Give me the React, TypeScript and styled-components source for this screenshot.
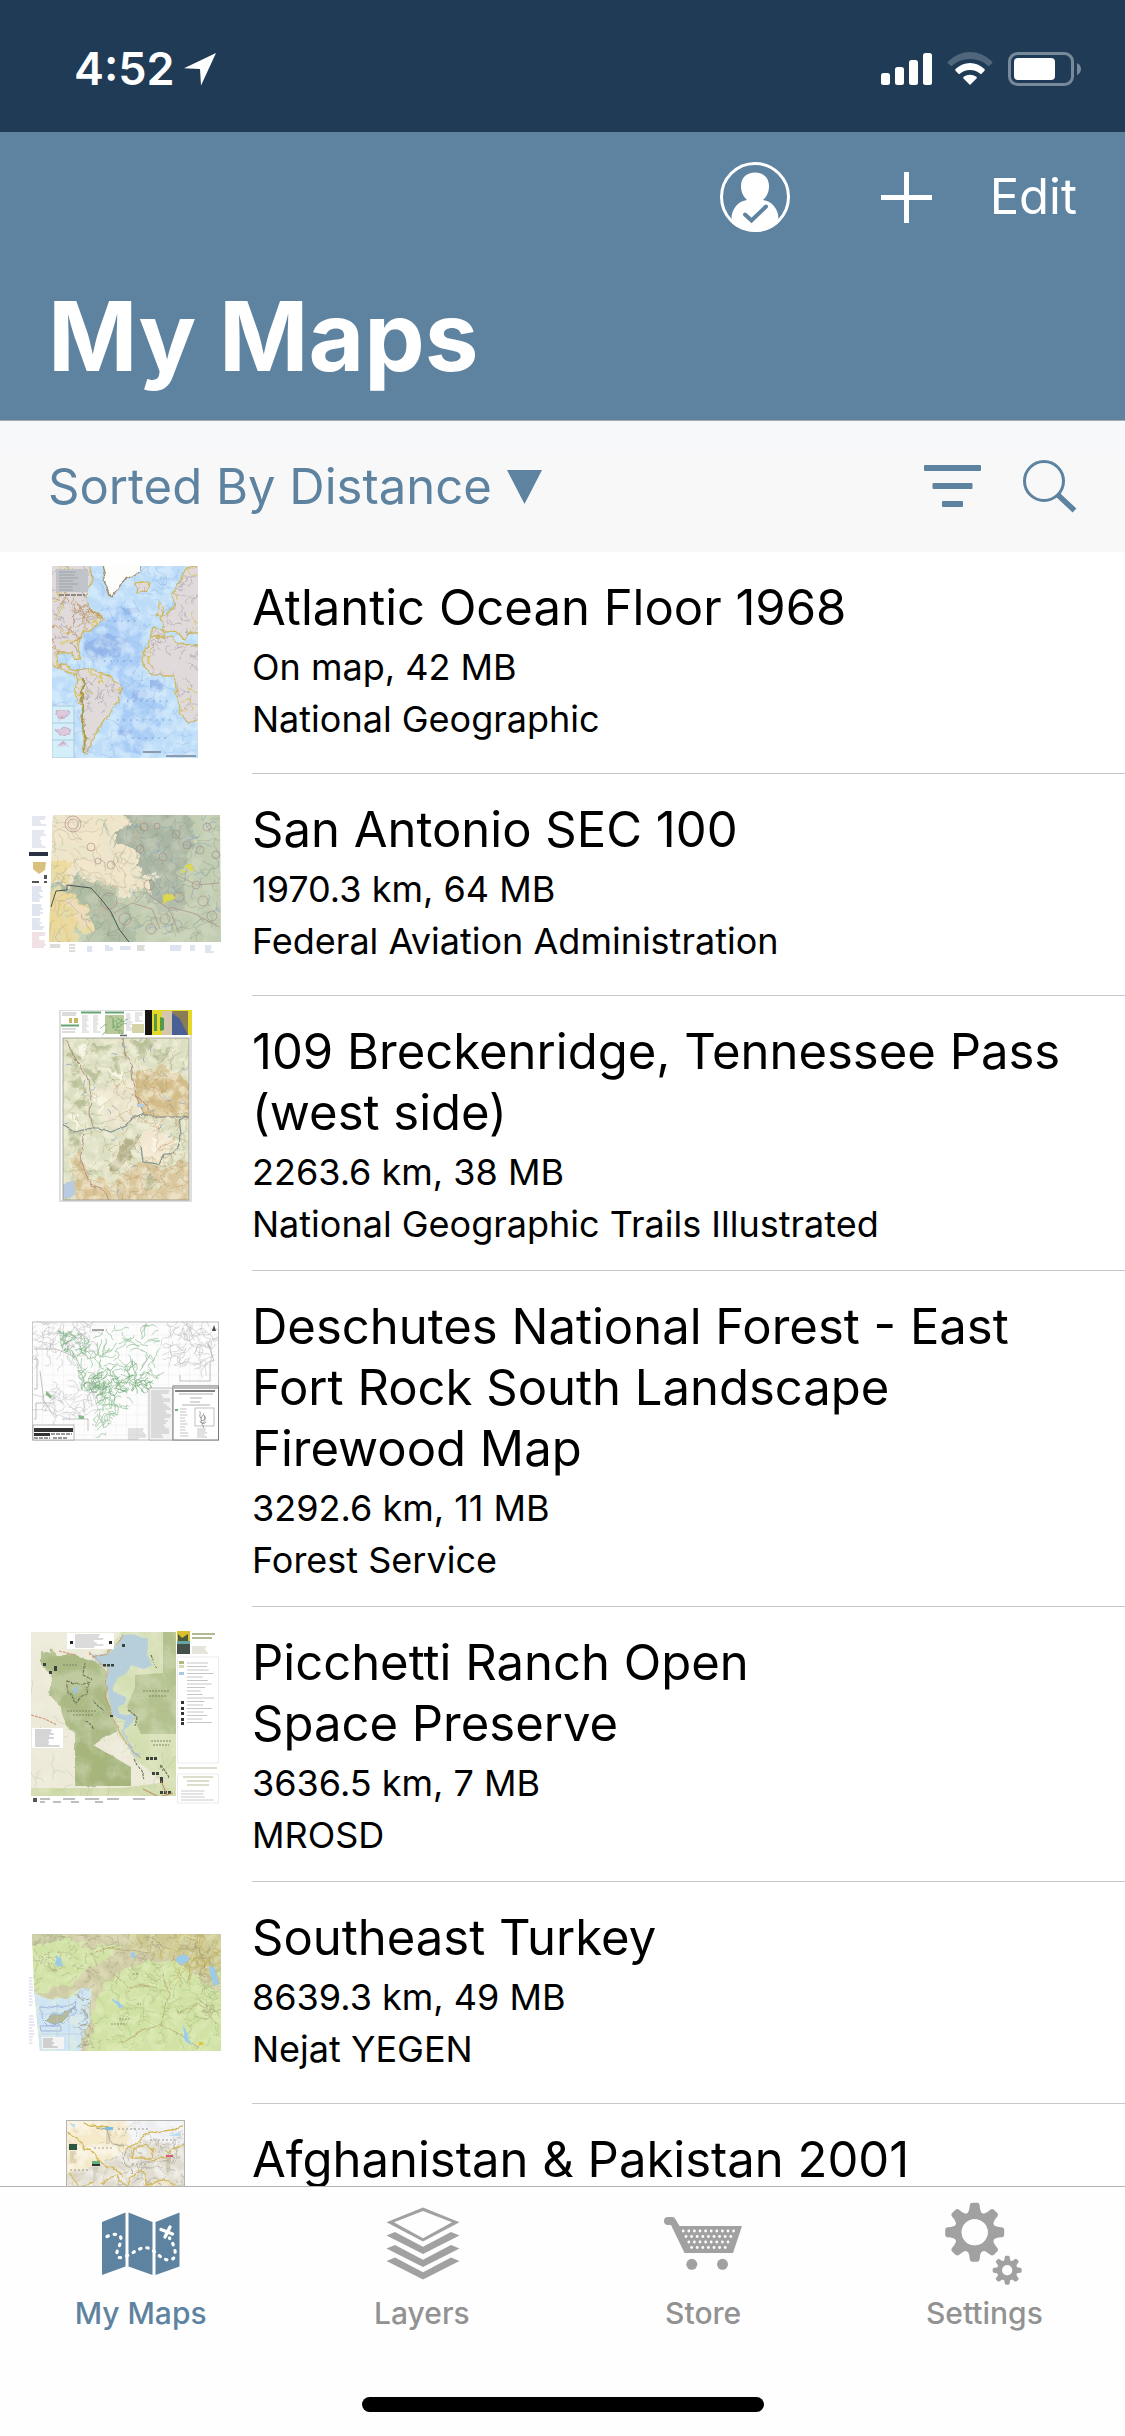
import React from "react";
import styled, { createGlobalStyle } from "styled-components";

const color = {
  status: "#1f3b56",
  brand: "#5d83a0",
  bar: "#f8f8f8",
  line: "#c8c7cc",
  tabLine: "#b2b2b2",
  tabBar: "#fefefe",
  muted: "#929292",
  icon: "#a1a1a1",
};

const GlobalStyle = createGlobalStyle`
  * { box-sizing: border-box; }
  body { margin: 0; background: #fff; font-family: Inter, "Liberation Sans", sans-serif; }
  button { border: 0; padding: 0; background: none; font: inherit; color: inherit; cursor: pointer; }
  svg { display: block; flex: none; }
`;

const Screen = styled.div`
  display: flex;
  flex-direction: column;
  height: 100vh;
  overflow: hidden;
`;

const StatusBar = styled.div`
  flex: none;
  display: flex;
  justify-content: space-between;
  align-items: center;
  height: 132px;
  padding: 6px 44px 0 74px;
  background: ${color.status};
  color: #fff;
`;

const Clock = styled.div`
  display: flex;
  align-items: center;
  gap: 8px;
  font-size: 45px;
  line-height: 54px;
  font-weight: 600;
`;

const Indicators = styled.div`
  display: flex;
  align-items: center;
  gap: 15px;
`;

const Header = styled.header`
  flex: none;
  background: ${color.brand};
  color: #fff;
  padding: 0 48px 24px;
`;

const Toolbar = styled.div`
  display: flex;
  align-items: center;
  justify-content: flex-end;
  gap: 58px;
  height: 130px;
`;

const IconButton = styled.button<{ $after?: number }>`
  margin-right: ${(p) => p.$after ?? 0}px;
`;

const TextButton = styled.button`
  && {
    font-size: 49px;
    line-height: 60px;
    font-weight: 400;
  }
`;

const PageTitle = styled.h1`
  margin: 14px 0 0;
  font-size: 96px;
  line-height: 120px;
  font-weight: 700;
`;

const SortBar = styled.div`
  flex: none;
  display: flex;
  align-items: center;
  justify-content: space-between;
  height: 132px;
  padding: 0 48px;
  border-top: 1px solid #a5abb0;
  background: linear-gradient(#f7f8fa, ${color.bar} 50%);
  color: ${color.brand};
`;

const SortButton = styled.button`
  && {
    display: flex;
    align-items: center;
    gap: 15px;
    font-size: 49px;
    line-height: 60px;
  }
`;

const SortTools = styled.div`
  display: flex;
  align-items: center;
  gap: 42px;
`;

const List = styled.ul`
  flex: 1;
  min-height: 0;
  margin: 0;
  padding: 0;
  list-style: none;
  overflow-y: auto;
  scrollbar-width: none;
`;

const Row = styled.li`
  display: flex;
  gap: 31px;
  padding-left: 29px;
`;

const Thumb = styled.div`
  flex: none;
  display: flex;
  align-items: center;
  justify-content: center;
  width: 192px;
  height: 192px;
  margin-top: 14px;
`;

const Details = styled.div`
  flex: 1;
  min-height: 222px;
  padding: 25px 60px 20px 0;
  border-bottom: 1px solid ${color.line};
`;

const Name = styled.h2`
  margin: 0 0 3px;
  font-size: 49px;
  line-height: 61px;
  font-weight: 400;
  color: #000;
`;

const Meta = styled.p`
  margin: 0;
  font-size: 36px;
  line-height: 52px;
  color: #000;
`;

const TabBar = styled.nav`
  flex: none;
  display: grid;
  grid-template-columns: repeat(4, 1fr);
  padding-top: 12px;
  border-top: 1px solid ${color.tabLine};
  background: ${color.tabBar};
`;

const Tab = styled.a<{ $active?: boolean }>`
  display: flex;
  flex-direction: column;
  align-items: center;
  gap: 6px;
  color: ${(p) => (p.$active ? color.brand : color.muted)};
  font-size: 30px;
  line-height: 36px;
  font-weight: 500;
  text-decoration: none;

  svg { color: ${(p) => (p.$active ? color.brand : color.icon)}; }
`;

const HomeIndicator = styled.div`
  grid-column: 1 / -1;
  justify-self: center;
  width: 402px;
  height: 15px;
  margin: 66px 0 24px;
  border-radius: 8px;
  background: #000;
`;

/* ---------- generated map linework ---------- */

function random(seed: number) {
  let s = seed;
  return () => {
    s = (s * 16807) % 2147483647;
    return s / 2147483647;
  };
}

/* Short wandering lines spread over a box. */
function wander(seed: number, count: number, x: number, y: number, w: number, h: number, step = 4, legs = 5) {
  const r = random(seed * 7919 + 13);
  let d = "";
  for (let i = 0; i < count; i++) {
    let px = x + r() * w;
    let py = y + r() * h;
    let a = r() * 6.28;
    d += `M${px.toFixed(1)} ${py.toFixed(1)}`;
    for (let j = 0; j < legs; j++) {
      a += (r() - 0.5) * 2;
      px += Math.cos(a) * step;
      py += Math.sin(a) * step;
      d += `L${px.toFixed(1)} ${py.toFixed(1)}`;
    }
  }
  return d;
}

/* Rows of broken dashes that stand for tiny print. */
function print(seed: number, x: number, y: number, w: number, h: number, lead = 3) {
  const r = random(seed * 104729 + 7);
  let d = "";
  for (let py = y; py < y + h; py += lead) {
    d += `M${x} ${py}h${(w * (0.5 + r() * 0.5)).toFixed(1)}`;
  }
  return d;
}

type InkProps = { d: string; c: string; w?: number; o?: number; clip?: string };
const Ink = ({ d, c, w = 0.7, o = 1, clip }: InkProps) => (
  <path d={d} fill="none" stroke={c} strokeWidth={w} opacity={o} clipPath={clip ? `url(#${clip})` : undefined} />
);

/* Shaded relief laid over a rectangle. */
type ReliefProps = { id: string; x: number; y: number; w: number; h: number; f: number; o: number; tint: string };
const Relief = ({ id, x, y, w, h, f, o, tint }: ReliefProps) => (
  <>
    <filter id={id} x="0" y="0" width="1" height="1">
      <feTurbulence type="fractalNoise" baseFrequency={f} numOctaves="4" seed="5" />
      <feColorMatrix values="0 0 0 0 1  0 0 0 0 1  0 0 0 0 1  3.4 0 0 0 -1.3" result="n" />
      <feComposite in="SourceGraphic" in2="n" operator="in" />
    </filter>
    <rect x={x} y={y} width={w} height={h} fill={tint} opacity={o} filter={`url(#${id})`} />
  </>
);

/* Gives coastlines and contours an irregular, natural edge. */
const Rough = ({ id, f = 0.09, s = 10 }: { id: string; f?: number; s?: number }) => (
  <filter id={id} x="-0.1" y="-0.1" width="1.2" height="1.2" colorInterpolationFilters="sRGB">
    <feTurbulence type="fractalNoise" baseFrequency={f} numOctaves="4" seed="9" />
    <feDisplacementMap in="SourceGraphic" scale={s} xChannelSelector="R" yChannelSelector="G" />
  </filter>
);

const AtlanticMap = () => {
  const land =
    "M-8 -8H36L40 12L34 22L36 36L42 46L51 54L44 61L33 64L27 75L24 84L28 93L23 92L19 86L9 87L4 91L6 99L15 98L17 104L25 107L22 110L10 103L-8 94ZM26 106L37 102L55 109L60 115L71 121L67 134L58 147L49 161L41 170L37 189L31 184L31 144L23 124ZM99 72L119 71L126 78L154 79V151L137 157L130 149L124 124L122 109L101 109L90 97L92 84ZM99 62L113 63L109 52L118 45L121 40L120 28L133 7L154 -6V68L138 66L134 73L124 65L112 66L110 72L100 72ZM103 49L107 36L112 44L110 50ZM84 18L97 16L96 24L86 26Z";
  return (
    <svg width="146" height="192" viewBox="0 0 146 192">
      <defs><clipPath id="atl"><path d={land} /></clipPath><Rough id="atlf" s={8} /></defs>
      <rect width="146" height="192" fill="#bcdcf8" />
      <g filter="url(#atlf)">
        <path d="M45 45L70 40L95 60L88 95L80 110L100 125L115 150L90 190L60 180L75 130L60 105L30 92L30 72Z" fill="#a8ccf5" />
        <path d="M32 78l20-12 22 8-6 16-30 6zM80 125h14v9h-14zM98 115h12l2 9-14 1zM70 42l14-2 6 6-16 3zM66 164h14v5h-14z" fill="#8fb0e6" opacity=".75" />
      </g>
      <Relief id="atlr" x={0} y={0} w={146} h={192} f={0.09} o={0.6} tint="#dff1fd" />
      <Ink d={wander(3, 130, 0, 0, 146, 192, 3)} c="#7fa6dd" w={0.6} o={0.5} />
      <g filter="url(#atlf)">
        <path d={land} fill="#e0dadb" stroke="#cfbb62" strokeWidth="1.3" />
        <Ink clip="atl" d={wander(8, 330, 0, 0, 146, 192, 3, 4)} c="#8f8796" w={0.6} o={0.65} />
        <Ink clip="atl" d={wander(21, 60, 0, 0, 146, 192, 5, 4)} c="#d8c556" w={0.9} />
        <Ink clip="atl" d={wander(14, 50, 0, 30, 60, 60, 4, 4)} c="#b98d56" />
        <path d="M48 -6L54 20L62 32L71 16L88 4V-6Z" fill="#fdfdfb" stroke="#a08f72" strokeWidth="1.4" />
        <path d="M31 112L31 150L33 186" fill="none" stroke="#aa9c52" strokeWidth="2.2" />
      </g>
      <rect x="4" y="3" width="32" height="23" fill="#c0c4c9" />
      <Ink d={print(4, 7, 6, 26, 19)} c="#9aa1a8" w={1} />
      <path d="M7 29h26" stroke="#756f60" strokeWidth="1.400" strokeDasharray="5 1" />
      <path d="M0 140h22v52H0z" fill="#d4effa" stroke="#9cbccb" strokeWidth=".7" />
      <path d="M0 157h22M0 174h22" stroke="#9cbccb" strokeWidth=".7" />
      <path d="M4 147l6-3 8 3-2 5-9 1zM4 165l8-5 7 3-2 6-10 1zM4 180l6-3 9 2" fill="#dccade" stroke="#c08da0" strokeWidth=".6" filter="url(#atlf)" />
      <path d="M56 55h28M52 95h32M75 135h42M65 154h56M80 172h34" stroke="#6688b4" strokeWidth="1.200" strokeDasharray="1.500 5" opacity=".8" />
      <path d="M91 186h18M114 190h30" stroke="#8b9bad" strokeWidth="2" />
    </svg>
  );
};

const AntonioMap = () => (
  <svg width="192" height="139" viewBox="0 0 192 139">
    <defs>
      <clipPath id="ant"><path d="M24 0L191 0L192 127L20 127Z" /></clipPath>
      <Rough id="antf" s={16} />
    </defs>
    <g clipPath="url(#ant)">
      <rect width="192" height="127" fill="#c1ccb1" />
      <g filter="url(#antf)">
        <path d="M95 -8L160 -8L165 30L150 60L160 90L130 100L110 70L80 45Z" fill="#aab6a4" />
        <path d="M24 70L56 64L85 78L112 110L100 135H50L66 112Z" fill="#aebca4" />
        <path d="M10 -8H97L100 10L88 20L86 30L104 31L110 43L108 52L130 60L118 67L122 78L106 74L98 82L84 70L60 66L50 60L42 70L10 72Z" fill="#f2e6cb" />
        <path d="M10 44L42 46L40 66L10 72Z" fill="#eddc9f" />
        <path d="M10 78L40 76L54 90L60 104L66 113L58 118L48 112L50 135H10Z" fill="#ecd897" />
        <path d="M36 80l16 10 14 26-12-4-12-18z" fill="#efdcba" />
      </g>
      <Relief id="antr" x={20} y={0} w={172} h={127} f={0.07} o={0.35} tint="#dfe3cc" />
      <Ink d={wander(5, 190, 20, 0, 172, 127, 3)} c="#7f927f" w={0.6} o={0.5} />
      <Ink d={wander(6, 40, 100, 5, 90, 115, 3, 4)} c="#7f9fc0" o={0.7} />
      <Ink d={wander(16, 50, 24, 5, 80, 110, 5, 5)} c="#cdb595" w={0.6} o={0.7} />
      <g fill="none" stroke="#a9807f" strokeWidth=".7" opacity=".8">
        {[[44, 9, 8], [44, 9, 5], [62, 32, 4], [82, 50, 4], [69, 46, 3], [115, 12, 4], [128, 11, 3], [147, 19, 4], [111, 34, 4], [134, 42, 4], [158, 30, 4], [171, 35, 4], [187, 40, 4], [120, 70, 5], [80, 86, 8], [136, 104, 5], [122, 114, 5], [174, 86, 5], [183, 101, 5], [96, 104, 6], [150, 82, 5], [167, 70, 4], [178, 12, 4]].map(([x, y, r], i) => (
          <circle key={i} cx={x} cy={y} r={r} />
        ))}
        <path d="M85 98l18-10 20 6 8 20M140 92l24 6 26 14M120 80l20 14 10 24M148 60l20 10 22-2" />
      </g>
      <path d="M22 92L27 76L38 75V70L62 73L72 84L82 97L90 114L100 127" fill="none" stroke="#4a5350" strokeWidth="1" />
      <path d="M154 51l8-1 1 5-6 4zM133 80l9-2 1 7-9 2z" fill="#dcd650" filter="url(#antf)" />
    </g>
    <rect x="0" y="37" width="19" height="4" fill="#2a3143" />
    <path d="M4 47l13 0-1 8-6 4-6-5z" fill="#d9c07d" />
    <path d="M15 60h3v4h-3zM3 66h7v2H3zM15 66h3v2h-3z" fill="#555" />
    <Ink d={print(1, 3, 2, 15, 10, 2) + print(2, 3, 16, 15, 17, 2)} c="#aab4cd" w={0.8} o={0.8} />
    <Ink d={print(3, 3, 72, 13, 15, 2) + print(4, 3, 90, 15, 12, 2) + print(5, 3, 104, 15, 11, 2)} c="#b0bcd6" w={0.8} />
    <Ink d={print(6, 3, 118, 14, 16, 2)} c="#dcb5bc" w={0.8} />
    <Ink d={print(7, 21, 130, 12, 3, 2) + print(8, 40, 130, 8, 8) + print(9, 108, 131, 11, 6, 2)} c="#a8a8a0" w={0.8} />
    <Ink d={print(10, 58, 132, 9, 6, 2) + print(11, 76, 131, 8, 6, 2) + print(12, 91, 132, 12, 4, 2) + print(13, 141, 131, 14, 6, 2) + print(14, 161, 131, 7, 5, 2) + print(15, 176, 131, 10, 7, 2)} c="#a9bddb" w={0.8} />
  </svg>
);

const BreckenridgeMap = () => (
  <svg width="133" height="192" viewBox="0 0 133 192">
    <defs>
      <clipPath id="brk"><rect x="4" y="28" width="126" height="162" /></clipPath>
      <Rough id="brkf" s={14} />
      <Rough id="brkl" s={5} />
    </defs>
    <rect width="133" height="192" fill="#dedede" />
    <rect x="2" y="1" width="129" height="189" fill="#fff" />
    <Ink d={print(1, 3, 3, 16, 3, 2) + print(2, 3, 19, 17, 6)} c="#999" />
    <path d="M22 1.5h20v2H22zM46 1.5h19v2H46zM2 14.500h18v2H2z" fill="#65a574" />
    <Ink d={print(3, 23, 6, 8, 18, 2) + print(4, 34, 6, 8, 18, 2) + print(5, 67, 4, 8, 18, 2) + print(6, 76, 3, 8, 9, 2)} c="#b5b5b5" />
    <path d="M46 5h19v19H46z" fill="#b8ca9a" />
    <Ink d={wander(2, 14, 48, 7, 14, 14, 2, 4)} c="#6ba469" />
    <path d="M10 8h3v5h-3zM15 8h4v5h-4z" fill="#c7b765" />
    <path d="M73 14h12v9H73z" fill="#d5d4a8" />
    <path d="M86 0h7v25h-7z" fill="#161616" />
    <path d="M93 0h40v25H93z" fill="#e4d928" />
    <path d="M103 1h26v24h-26z" fill="#8a7c55" />
    <path d="M103 1l10 0 2 12 2 12h-14z" fill="#d5c7ad" />
    <path d="M113 3l8 6 4 8 4 8h-16z" fill="#4a6094" />
    <path d="M101 7l4 1v12l-4 1zM95 4h3v17h-3z" fill="#559b47" />
    <path d="M61 25.500h7" stroke="#666" strokeWidth="1.500" />
    <g clipPath="url(#brk)">
      <rect x="4" y="28" width="126" height="162" fill="#dcdfc2" />
      <g filter="url(#brkf)">
        <path d="M78 64L104 55L118 62L140 80V108L110 105L86 106L76 90L74 76Z" fill="#d3bc88" />
        <path d="M18 130L24 148L30 170L42 168L60 180L70 200H20L14 160Z" fill="#d9c294" />
        <path d="M62 165L80 150L104 160L140 150V200H46Z" fill="#dac79d" />
        <path d="M82 122l20-6 12 14-6 24-26-4z" fill="#f2e6cf" />
        <path d="M46 75l30-4 4 40-26 6-20-20z" fill="#e9e3cb" />
        <path d="M70 125l10 2-8 20-14 12-8 0z" fill="#a39c74" opacity=".7" />
        <path d="M8 38l12 10-4 16zM30 34l24 2-12 12zM70 30l30 0-18 20zM8 72l14-6 4 18zM16 92l12-4 2 22zM50 48l20-6-10 18zM90 44l26-8-14 18zM26 56l16 4-8 16zM6 120l20 4-10 20zM88 160l10 20-12 2z" fill="#aeb68c" opacity=".7" />
        <path d="M20 34l8 4-6 14zM48 62l18-4-6 10zM36 84l12 4-10 16zM10 104l10 2-6 12zM92 130l10 6-8 10z" fill="#fbf8ea" opacity=".9" />
      </g>
      <Relief id="brkr" x={4} y={28} w={126} h={162} f={0.1} o={0.6} tint="#f8f3e0" />
      <g filter="url(#brkl)">
        <Ink d={wander(9, 130, 4, 28, 126, 162, 4, 4)} c="#a5a277" w={0.8} o={0.45} />
        <Ink d={wander(19, 70, 60, 60, 70, 130, 4, 4)} c="#bb9563" w={0.9} o={0.45} />
        <Ink d="M8 30L14 48L22 56L28 68L32 84L31 104L34 118M64 28L66 44L72 54L74 72L78 88L84 104M26 124L22 144L24 158L32 176L46 180L50 190M78 86L90 100" c="#a58374" w={0.8} />
        <path d="M2 114L16 122L32 118L40 118L52 122L66 116L74 108L84 103L90 106L130 106L120 110L122 124L118 138L112 144L104 144L100 154L84 152L82 136" fill="none" stroke="#84928f" strokeWidth="1.200" />
        <path d="M2 174L16 172L18 184L12 188L2 188Z" fill="#b8cbe0" />
      </g>
      <path d="M78 94h7v3h-7zM104 84l5 5-4-1z" fill="#b5cddc" />
      <Ink d={wander(4, 26, 6, 30, 120, 155, 2, 3)} c="#7c9dc0" />
    </g>
    <rect x="4" y="28" width="126" height="162" fill="none" stroke="#868b7c" strokeWidth=".7" />
  </svg>
);

const DeschutesMap = () => {
  const forest = "M26 8L60 14L84 4L125 2L128 22L132 44L150 46V55L124 58L118 70L106 76L96 88L82 96L72 118L60 116V100L66 92L62 72L48 68L44 40L30 28Z";
  return (
    <svg width="187" height="120" viewBox="0 0 187 120">
      <defs><clipPath id="des"><path d={forest} /></clipPath></defs>
      <rect x=".5" y="1" width="186" height="118" fill="#fdfdfd" stroke="#aaa" strokeWidth=".8" />
      <path d={Array.from({ length: 18 }, (_, i) => `M${i * 10.5} 1v118`).join("") + Array.from({ length: 12 }, (_, i) => `M0 ${i * 10 + 4}h187`).join("")} stroke="#ececec" strokeWidth=".5" />
      <Ink d={wander(2, 70, 2, 2, 60, 36, 3) + wander(5, 70, 136, 4, 46, 40, 3) + wander(6, 60, 10, 60, 60, 38, 3)} c="#b9b9b9" w={0.5} />
      <Ink d="M2 28H24L44 36L50 50M2 38H5V68H2M8 50L12 80L20 92M20 82H4V98H2M30 98H56V110M176 22L182 40H178V60H148V54M118 34L108 50" c="#9c9c9c" w={0.6} />
      <Ink clip="des" d={wander(7, 90, 26, 4, 100, 60, 3, 5) + wander(11, 110, 44, 45, 80, 70, 3, 5)} c="#93c198" w={0.7} />
      <Ink clip="des" d={wander(17, 60, 48, 48, 70, 24, 2, 6)} c="#72ac7a" w={0.7} />
      <Ink clip="des" d={wander(27, 30, 26, 8, 30, 25, 2, 5)} c="#72ac7a" w={0.7} />
      <path d="M14 70l6 5-1 3-5-4zM46 94l6 1v3h-5z" fill="#86b98b" />
      <path d="M117 67h24v52h-24z" fill="#f4f4f4" stroke="#999" strokeWidth=".6" />
      <Ink d={print(1, 119, 70, 20, 48, 2)} c="#b5b5b5" w={0.8} />
      <Ink d={print(7, 96, 108, 18, 11, 2)} c="#b5b5b5" w={0.8} />
      <rect x="141" y="65" width="45.500" height="54" fill="#fff" stroke="#777" strokeWidth="1" />
      <path d="M141 66h45v2h-45z" fill="#bbb" />
      <path d="M143 70h40" stroke="#555" strokeWidth="1.300" />
      <path d="M147 73h34M158 77h12M158 81h10M150 84h28" stroke="#999" strokeWidth=".8" />
      <rect x="163" y="87" width="19" height="18" fill="#fff" stroke="#999" strokeWidth=".6" />
      <Ink d={wander(3, 6, 168, 91, 8, 10, 2, 4)} c="#777" />
      <Ink d={print(3, 148, 88, 9, 28, 3) + print(4, 165, 108, 14, 9, 2)} c="#aaa" />
      <path d="M143 88h3v2h-3z" fill="#75ad7b" />
      <rect x="1" y="104" width="41" height="15" fill="#fff" stroke="#888" strokeWidth=".6" />
      <path d="M2 107h39v4H2zM2 112h16v3H2z" fill="#333" />
      <path d="M19 113h21M2 117h16M21 117h15" stroke="#777" strokeWidth="1.500" strokeDasharray="4 1" />
      <path d="M182 4l2 6h-4z" fill="#444" />
      <path d="M60 9h12" stroke="#888" strokeWidth="1.500" />
    </svg>
  );
};

const PicchettiMap = () => (
  <svg width="188" height="173" viewBox="0 0 188 173">
    <defs><clipPath id="pic"><rect y="1" width="145" height="164" /></clipPath><Rough id="picf" s={5} /></defs>
    <g clipPath="url(#pic)">
      <rect width="145" height="165" fill="#d6dfb6" />
      <g filter="url(#picf)">
        <path d="M-6 -6H95L72 25L62 28L76 40L75 70L84 100L104 128L130 150L140 165H-6Z" fill="#ece9d9" />
        <path d="M10 20L20 22V16L26 24L44 24L58 28L70 34L76 42L75 66L82 82L86 100L74 106L60 116L82 126L100 140V155H44V101L36 98L30 78L18 64L20 44L10 34Z" fill="#abba85" />
      </g>
      <path d="M62 114L100 136V155H45V110Z" fill="#a5b57c" />
      <path d="M76 40L76 66L84 88L96 112L112 132L145 165V100H104V46H92Z" fill="#d3deb1" filter="url(#picf)" />
      <path d="M132 1H145V103H110L104 90L96 76L104 56V44L132 42Z" fill="#b2c18d" />
      <path d="M0 157H90L145 150V165H0Z" fill="#cfdaa9" />
      <Relief id="picr" x={0} y={0} w={145} h={165} f={0.05} o={0.28} tint="#f6f5e4" />
      <Ink d={wander(8, 40, 0, 60, 140, 100, 4, 5)} c="#a7ad88" w={0.6} o={0.45} />
      <g filter="url(#picf)">
        <path d="M92 2L104 4L118 8L116 24L121 34L112 38L100 34L96 44L86 48L82 60L94 66V72L86 76L90 82L104 84L102 92L94 100L98 112L104 120L110 122L106 126L98 118L92 100L94 90L82 84L75 56L77 38L64 30L62 25L78 22L86 16Z" fill="#b7cfda" />
        <path d="M92 3L86 14L74 24L62 27M58 22L76 38L75 66L84 92L94 112L110 126" fill="none" stroke="#cb9a75" strokeWidth=".9" />
      </g>
      <path d="M28 20l16 4M0 84l14 4 12 6" fill="none" stroke="#cf9a7b" strokeWidth="1.200" strokeDasharray="3 1" />
      <g filter="url(#picf)">
        <path d="M36 50L50 54L58 50L56 62L46 72L38 60ZM54 32L52 44L60 48M60 68L72 80M54 90L62 98M96 78L106 86L104 96M120 24L126 38M104 128L114 148M130 134L138 146" fill="none" stroke="#6c7558" strokeWidth="1.100" strokeDasharray="3 1" />
        <path d="M42 58l4-2 1 6-4 2z" fill="#9fc3d8" />
      </g>
      <path d="M12 32h3v3h-3zM23 35h3v5h-3zM18 40h3v3h-3zM72 33h3v2.500h-3zM76 33h3v2.500h-3zM80 33h3v2.500h-3zM115 126h3v3h-3zM119 126h3v3h-3zM123 126h3v3h-3zM121 141h3v3h-3zM125 141h3v3h-3zM129 146h3v6h-3zM129 160h3v3h-3zM133 160h3v3h-3zM137 160h3v3h-3zM79 84h3v2h-3zM91 13h3v3h-3z" fill="#3c423c" />
      <path d="M36 2h47v16H36z" fill="#fff" />
      <Ink d={print(3, 44, 4, 34, 13, 2)} c="#999" />
      <path d="M39 10h3v3h-3zM78 10h3v3h-3z" fill="#222" />
      <path d="M1 97h31v20H1z" fill="#fff" />
      <Ink d={print(4, 4, 99, 26, 18, 2)} c="#888" />
      <path d="M36 80h30M42 84h20M112 60h26M118 65h18M120 110h20M122 114h16M32 34h14" stroke="#7c8760" strokeWidth="1.200" strokeDasharray="2 1" />
      <path d="M112 158l16 8 14-4M130 150l6 14" stroke="#bb8560" fill="none" />
    </g>
    <path d="M146 0h13v10h-13z" fill="#d9be2d" />
    <path d="M147 3l4 4 6-4v7h-10z" fill="#4a5a3a" />
    <path d="M146 10h13v3h-13z" fill="#66a5a0" />
    <path d="M146 13h13v10h-13z" fill="#44504a" />
    <path d="M161 3h23M161 7h20" stroke="#9aa16c" strokeWidth="1.500" />
    <Ink d={print(7, 161, 16, 16, 8, 2)} c="#b4b69a" />
    <rect x="146.500" y="26" width="41" height="106" fill="none" stroke="#ececec" />
    <Ink d={print(8, 156, 32, 27, 62, 3.5)} c="#bfbfbf" w={0.9} />
    <path d="M148 30h5v3h-5z" fill="#a9bb7e" />
    <path d="M148 34h5v3h-5z" fill="#d5deb3" />
    <path d="M148 41h5v3h-5z" fill="#a9c9dc" />
    <path d="M150 70h3v3h-3zM150 76h3v3h-3zM150 81h3v3h-3zM150 87h3v3h-3zM150 91h3v3h-3z" fill="#333" />
    <path d="M147 137h39M152 146h30M156 150h22M156 154h22" stroke="#b7bc9c" strokeWidth="1.200" />
    <Ink d={print(9, 150, 160, 34, 12, 3)} c="#b5b5b5" />
    <rect x="146.500" y="143" width="41" height="29" fill="none" stroke="#ececec" />
    <path d="M2 169h4" stroke="#555" strokeWidth="4" />
    <path d="M9 168h10M32 168h12M54 168h14M76 168h12M102 168h12M9 171h5M22 171h8M40 171h8M64 171h8" stroke="#aaa" strokeWidth="1.300" />
  </svg>
);

const TurkeyMap = () => (
  <svg width="192" height="117" viewBox="0 0 192 117">
    <defs>
      <clipPath id="tur"><path d="M3 0H192V117H11L5 54Z" /></clipPath>
      <Rough id="turf" s={14} />
      <Rough id="turl" s={5} />
    </defs>
    <g clipPath="url(#tur)">
      <rect width="192" height="117" fill="#d0e2a4" />
      <g filter="url(#turf)">
        <path d="M-8 -8H192V60L180 50L165 36L140 28L118 26L86 40L76 50L66 74L56 117H50L60 60L40 60L24 66L-6 58L40 52L70 30L100 10L60 14L36 0Z" fill="#cfcaa6" />
        <path d="M100 -8H180L200 20L188 50L160 30L130 22L100 16Z" fill="#cec994" />
        <path d="M-8 -8H30L36 6L-4 12Z" fill="#bdbf98" />
      </g>
      <path d="M0 56L24 66L46 62L52 54L64 54L60 70L62 84L54 104L50 124H0Z" fill="#cfe5f5" filter="url(#turl)" />
      <Relief id="turr" x={0} y={0} w={192} h={117} f={0.1} o={0.35} tint="#edf3cf" />
      <g filter="url(#turl)">
        <Ink d={wander(4, 150, 0, 0, 192, 46, 3, 4)} c="#968f6c" w={0.6} o={0.6} />
        <Ink d={wander(12, 100, 66, 36, 126, 80, 4, 4)} c="#a6bf7a" w={0.6} o={0.7} />
        <Ink d={wander(15, 24, 144, 0, 44, 40, 5, 5)} c="#c3ad3f" o={0.7} />
        <Ink d={wander(31, 40, 50, 55, 10, 60, 2, 4)} c="#8f8a70" w={0.6} o={0.7} />
        <Ink d={wander(33, 30, 172, 20, 16, 70, 3, 4)} c="#958d66" w={0.6} o={0.7} />
        <Ink d="M90 110L110 98L132 90L140 60L134 40M132 90L150 100L170 114M96 60L110 50L128 54M80 36L100 54L120 52M60 20L80 14L120 20M148 80L170 70L188 90" c="#b3a06c" w={0.7} />
        <path d="M16 86L22 80L32 80L46 72L40 82L34 88L24 90Z" fill="#b6b896" stroke="#8aa3c0" strokeWidth=".7" />
        <path d="M12 72L30 74L48 68L46 78L36 90L20 92L12 84Z" fill="none" stroke="#9aa8d8" strokeWidth=".8" />
        <path d="M28 20l4 4 2 8-8-1zM148 24l8-4 4 6-6 5-8-3zM180 32l6 3 4 14-5 2-4-10zM154 90l5 10 3 10-6-4zM82 64l8 4 6 4-6 1zM100 20l4-1 3 4-4 1z" fill="#9bcbe8" />
      </g>
      <path d="M11 92H32V97H12Z" fill="none" stroke="#9aa8d8" strokeWidth=".8" />
      <path d="M40 62v54M28 68v48M10 80h50M12 100h42" stroke="#b5cde2" strokeWidth=".6" />
      <path d="M13 103h22v12H13z" fill="#f4f4f4" />
      <Ink d={print(5, 14, 105, 18, 9, 2)} c="#aaa" w={1} />
      <path d="M82 90h16M90 85h10M148 78h4M104 40h6M108 70h4" stroke="#8b9872" strokeWidth="1.200" strokeDasharray="2 1" />
      <path d="M170 108h4v3h-4z" fill="#e0c92c" />
    </g>
    <Ink d={print(7, 0, 44, 4, 30, 3) + print(8, 0, 82, 6, 30, 3)} c="#d2cfe6" w={1} />
  </svg>
);

const AfghanistanMap = () => (
  <svg width="119" height="188" viewBox="0 0 119 188">
    <defs><clipPath id="afg"><rect width="119" height="188" /></clipPath><Rough id="afgf" s={7} /></defs>
    <rect width="119" height="188" fill="#eee9dc" />
    <g clipPath="url(#afg)">
      <g filter="url(#afgf)">
        <path d="M-6 -6H60L62 28L40 42L26 50L-6 58Z" fill="#f4e9c9" />
        <path d="M60 -6H126V30L90 36L70 28Z" fill="#eceef2" />
        <path d="M10 50L48 40L66 28L80 20L126 26V196H-6V58Z" fill="#e0dccf" />
        <path d="M-6 78h67l30-20 35 10v128H-6z" fill="#e8dfc3" />
      </g>
      <Relief id="afgr" x={1} y={1} w={117} h={186} f={0.08} o={0.5} tint="#fff" />
      <g filter="url(#afgf)">
        <Ink d={wander(6, 190, 50, 15, 66, 160, 3, 4)} c="#8f8c80" w={0.6} o={0.6} />
        <Ink d={wander(26, 40, 2, 4, 60, 160, 4, 4)} c="#c9b68a" w={0.6} o={0.5} />
        <path d="M1 12L10 16L18 26L26 32L40 46L58 56M18 2L24 6L44 8M62 30L74 22L80 14L92 12L104 10L118 6M68 30L78 24L88 30L84 38L66 38ZM36 62L50 56L60 64L72 50L80 52V66L96 58L110 66M84 40L100 38L106 28L118 24M2 54L14 66L30 62" fill="none" stroke="#d3b95c" strokeWidth="1.400" />
        <path d="M62 30L58 40L66 54M30 8L40 10L44 22L60 26" fill="none" stroke="#aea48e" strokeWidth="1" />
      </g>
    </g>
    <path d="M3 24h8v6H3z" fill="#2d5740" />
    <path d="M26 41h8v3h-8z" fill="#65b07c" />
    <path d="M26 44h8v2h-8z" fill="#333" />
    <path d="M39 7h8v3h-8z" fill="#7fbbe5" />
    <path d="M100 35h7v2h-7z" fill="#d85a80" />
    <Ink d={print(1, 4, 32, 7, 12, 2) + print(2, 27, 48, 6, 14, 2) + print(3, 40, 11, 7, 14, 2) + print(4, 100, 39, 6, 14, 2)} c="#b8ae92" />
    <path d="M52 9h32M84 20h26M28 28h18M66 44h14M4 50h18" stroke="#8a8576" strokeWidth="1.200" strokeDasharray="2 2" opacity=".8" />
    <path d="M102 16l12-4v4zM4 4h5v4z" fill="#bcdcf2" />
    <rect x=".5" y=".5" width="118" height="187" fill="none" stroke="#b4b4b0" />
  </svg>
);

/* ---------- icons ---------- */

const LocationIcon = () => (
  <svg width="34" height="34" viewBox="0 0 34 34" fill="#fff"><path d="M33 1L1 16.300L17 17L18 33.500Z" /></svg>
);

const SignalIcon = () => (
  <svg width="51" height="34" viewBox="0 0 51 34" fill="#fff">
    <rect y="21" width="9" height="12" rx="2.500" />
    <rect x="14" y="15" width="9" height="18" rx="2.500" />
    <rect x="28" y="8" width="9" height="25" rx="2.500" />
    <rect x="42" y="1" width="9" height="32" rx="2.500" />
  </svg>
);

const WifiIcon = () => (
  <svg width="46" height="34" viewBox="0 0 46 34" fill="#fff">
    <path opacity=".22" d="M1 9.500Q10.500 0 23 0T45 9.500Q46 10.500 45 11.500L41.500 14.300Q34 7 23 7T4.500 14.300L1 11.500Q0 10.500 1 9.500Z" />
    <path d="M8.500 17Q15 11 23 11T37.500 17Q38 18 37.500 18.800L34 22.300Q29 18 23 18T12 22.300L8.500 18.800Q8 18 8.500 17Z" />
    <path d="M16.500 24.800Q23 20.500 29.500 24.800Q30 25.800 29.500 26.500L23 33L16.500 26.500Q16 25.800 16.500 24.800Z" />
  </svg>
);

const BatteryIcon = () => (
  <svg width="73" height="34" viewBox="0 0 73 34">
    <rect x="1.500" y="1.500" width="63" height="31" rx="8" fill="none" stroke="#fff" strokeWidth="3" opacity=".4" />
    <rect x="6" y="6" width="41" height="22" rx="4" fill="#fff" />
    <path d="M69 11Q73 13 73 17T69 23Z" fill="#fff" opacity=".4" />
  </svg>
);

const ProfileIcon = () => (
  <svg width="72" height="72" viewBox="0 0 72 72">
    <clipPath id="avatar"><circle cx="36" cy="36" r="35" /></clipPath>
    <path clipPath="url(#avatar)" fill="#fff" d="M12.500 58C12.500 47 20 40 28 39C24 35 22 31 22 25C22 16.500 28 11.500 36 11.500S50 16.500 50 25C50 31 48 35 44 39C52 40 59.500 47 59.500 58L59 72H13Z" />
    <circle cx="36" cy="36" r="33.500" fill="none" stroke="#fff" strokeWidth="3" />
    <path d="M26 53.500L32.500 59.500L47 45.500" fill="none" stroke={color.brand} strokeWidth="4" strokeLinecap="round" />
  </svg>
);

const PlusIcon = () => (
  <svg width="51" height="51" viewBox="0 0 51 51" fill="#fff"><path d="M23 0h5v23h23v5H28v23h-5V28H0v-5h23Z" /></svg>
);

const CaretIcon = () => (
  <svg width="36" height="36" viewBox="0 0 36 36"><path d="M0 1H35L17.500 35Z" fill="currentColor" /></svg>
);

const FilterIcon = () => (
  <svg width="57" height="44" viewBox="0 0 57 44" fill="currentColor">
    <rect width="57" height="6" rx="1" />
    <rect x="8.500" y="18" width="40" height="6" rx="1" />
    <rect x="18" y="36" width="21" height="6" rx="1" />
  </svg>
);

const SearchIcon = () => (
  <svg width="54" height="54" viewBox="0 0 54 54" fill="none" stroke="currentColor">
    <circle cx="21" cy="21" r="19.500" strokeWidth="3" />
    <path d="M35 35L51.500 50.500" strokeWidth="5.500" />
  </svg>
);

const MapsIcon = () => (
  <svg width="90" height="90" viewBox="0 0 90 90">
    <path fill="currentColor" d="M6 23L29.500 13.500V67.500L6 76ZM32.500 13.500L56.500 23V76L32.500 67.500ZM59.500 23L83.500 13.500V67.500L59.500 76Z" />
    <g fill="none" stroke="#fff" strokeLinecap="round">
      <path strokeWidth="3.200" strokeDasharray="1.400 6" d="M11 37.500C17 34.500 25 34 25 40C25 46 20 51 21 56C22 61 29 58 35.500 54.500C41 51 47 47.500 52 49C59 51 65 61 73 61C80 61 80 53 78 48C77 44 75 42 73.500 39" />
      <path strokeWidth="3.400" d="M65 30.500L76.500 35M74 28L69 38" />
    </g>
  </svg>
);

const LayersIcon = () => (
  <svg width="90" height="90" viewBox="0 0 90 90" fill="currentColor">
    <path fillRule="evenodd" d="M46 8.500L82.500 23.300L46 42.500L9.500 23.300ZM46 12L17 23.300L46 39.200L75 23.300Z" />
    {[0, 13, 25.5].map((y) => (
      <path key={y} transform={`translate(0 ${y})`} d="M9.500 36.500L18 33L46 47.700L74 33L82.500 36.500L46 55Z" />
    ))}
  </svg>
);

const CartIcon = () => (
  <svg width="90" height="90" viewBox="0 0 90 90" fill="currentColor">
    <path d="M10 18H14.500Q16 18 17 19.500L21.500 27H84L75 54H26.500L13 26H10A4 4 0 0 1 10 18Z" />
    <circle cx="33.800" cy="65.300" r="5.500" />
    <circle cx="64.500" cy="65.300" r="5.500" />
    {[0, 1, 2, 3].flatMap((row) =>
      Array.from({ length: 10 - row }, (_, i) => (
        <circle key={`${row}-${i}`} cx={25.2 + row * 2.8 + i * 5.6} cy={32 + row * 5.5} r="1.400" fill={color.tabBar} />
      ))
    )}
  </svg>
);

const tooth = (r: number) =>
  `M${-r * 0.3} ${-r * 0.55}Q${-r * 0.17} ${-r * 0.72} ${-r * 0.17} ${-r * 0.9}Q${-r * 0.16} ${-r} ${-r * 0.08} ${-r}H${r * 0.08}Q${r * 0.16} ${-r} ${r * 0.17} ${-r * 0.9}Q${r * 0.17} ${-r * 0.72} ${r * 0.3} ${-r * 0.55}Z`;

const Gear = ({ x, y, r, hole }: { x: number; y: number; r: number; hole: number }) => (
  <g transform={`translate(${x} ${y})`} fill="currentColor">
    {Array.from({ length: 8 }, (_, i) => (
      <path key={i} d={tooth(r)} transform={`rotate(${i * 45})`} />
    ))}
    <circle r={(r * 0.7 + hole) / 2} fill="none" stroke="currentColor" strokeWidth={r * 0.7 - hole} />
    <circle r={hole} fill={color.tabBar} />
  </g>
);

const SettingsIcon = () => (
  <svg width="90" height="90" viewBox="0 0 90 90">
    <Gear x={35.7} y={33.3} r={29.5} hole={13} />
    <Gear x={68.2} y={71.3} r={14.5} hole={5} />
  </svg>
);

/* ---------- data ---------- */

const maps = [
  { name: "Atlantic Ocean Floor 1968", meta: "On map, 42 MB", publisher: "National Geographic", Preview: AtlanticMap },
  { name: "San Antonio SEC 100", meta: "1970.3 km, 64 MB", publisher: "Federal Aviation Administration", Preview: AntonioMap },
  { name: "109 Breckenridge, Tennessee Pass (west\u00a0side)", meta: "2263.6 km, 38 MB", publisher: "National Geographic Trails Illustrated", Preview: BreckenridgeMap },
  { name: "Deschutes National Forest - East Fort Rock South Landscape Firewood\u00a0Map", meta: "3292.6 km, 11 MB", publisher: "Forest Service", Preview: DeschutesMap },
  { name: "Picchetti Ranch Open Space\u00a0Preserve", meta: "3636.5 km, 7 MB", publisher: "MROSD", Preview: PicchettiMap },
  { name: "Southeast Turkey", meta: "8639.3 km, 49 MB", publisher: "Nejat YEGEN", Preview: TurkeyMap },
  { name: "Afghanistan & Pakistan 2001", meta: "", publisher: "", Preview: AfghanistanMap },
];

const tabs = [
  { label: "My Maps", Icon: MapsIcon },
  { label: "Layers", Icon: LayersIcon },
  { label: "Store", Icon: CartIcon },
  { label: "Settings", Icon: SettingsIcon },
];

export default function App() {
  return (
    <Screen>
      <GlobalStyle />
      <StatusBar>
        <Clock>4:52<LocationIcon /></Clock>
        <Indicators><SignalIcon /><WifiIcon /><BatteryIcon /></Indicators>
      </StatusBar>
      <Header>
        <Toolbar>
          <IconButton $after={32} aria-label="Account"><ProfileIcon /></IconButton>
          <IconButton aria-label="Add map"><PlusIcon /></IconButton>
          <TextButton>Edit</TextButton>
        </Toolbar>
        <PageTitle>My Maps</PageTitle>
      </Header>
      <SortBar>
        <SortButton>Sorted By Distance<CaretIcon /></SortButton>
        <SortTools>
          <IconButton aria-label="Filter"><FilterIcon /></IconButton>
          <IconButton aria-label="Search"><SearchIcon /></IconButton>
        </SortTools>
      </SortBar>
      <List>
        {maps.map(({ name, meta, publisher, Preview }) => (
          <Row key={name}>
            <Thumb><Preview /></Thumb>
            <Details>
              <Name>{name}</Name>
              {meta && <Meta>{meta}</Meta>}
              {publisher && <Meta>{publisher}</Meta>}
            </Details>
          </Row>
        ))}
      </List>
      <TabBar>
        {tabs.map(({ label, Icon }, i) => (
          <Tab key={label} href="#" $active={i === 0}><Icon />{label}</Tab>
        ))}
        <HomeIndicator />
      </TabBar>
    </Screen>
  );
}
